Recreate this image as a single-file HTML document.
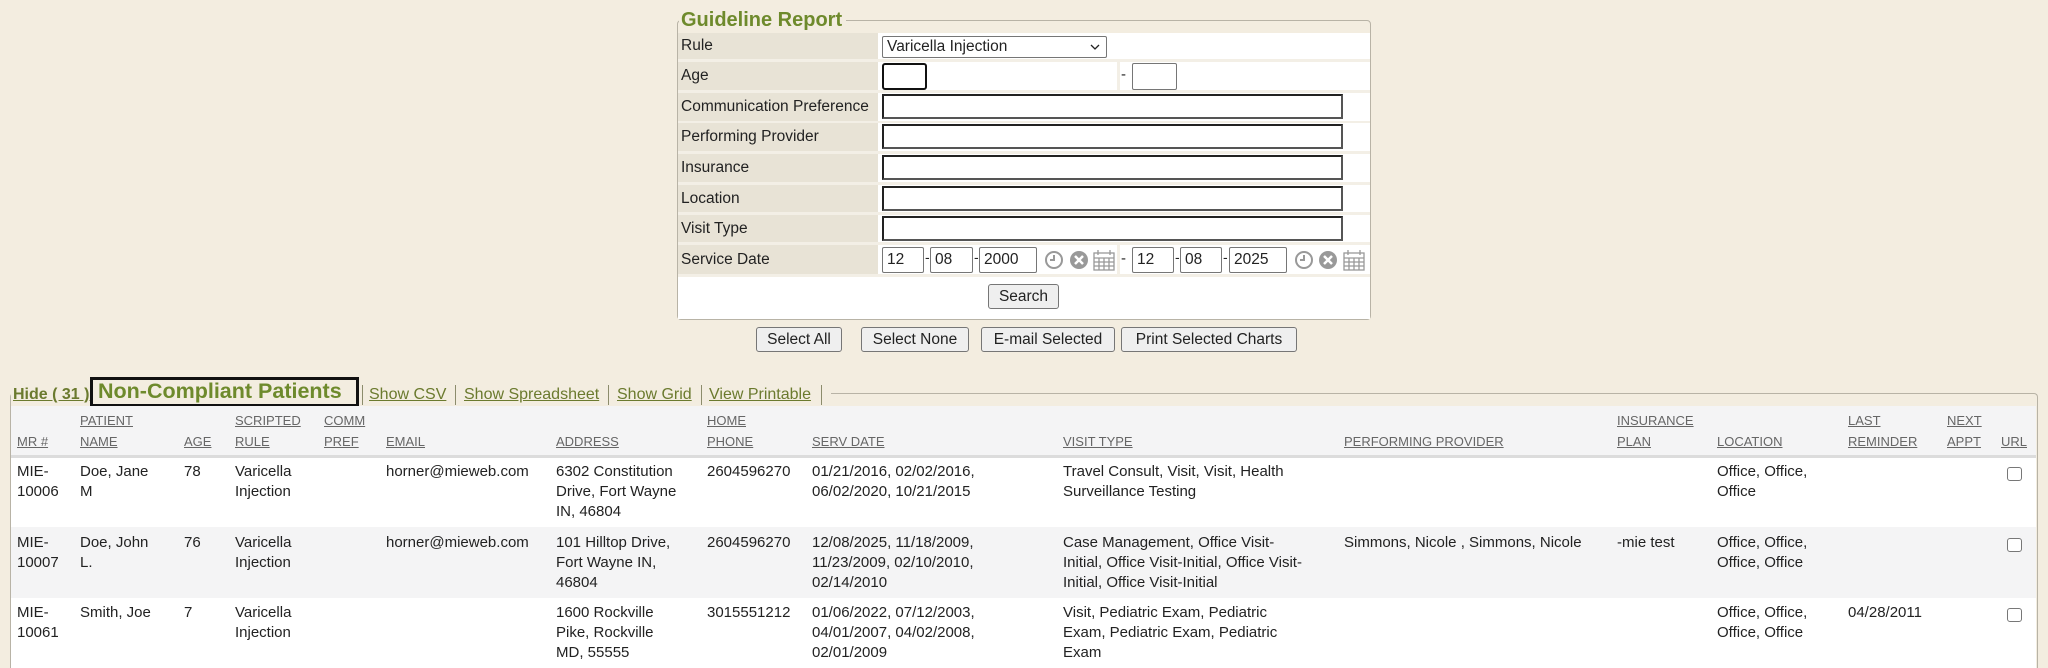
<!DOCTYPE html>
<html style="height:668px;overflow:hidden"><head><meta charset="utf-8"><style>
*{margin:0;padding:0;box-sizing:border-box}
body{width:2048px;height:668px;background:#f3ede0;font-family:"Liberation Sans",Arial,sans-serif;position:relative;overflow:hidden;color:#222}
.a{position:absolute;white-space:nowrap}
.fs{position:absolute;left:677px;top:20px;width:694px;height:300px;border:1px solid #b8b3a6;border-radius:4px}
.lg{position:absolute;left:679px;top:9px;font-weight:bold;font-size:20px;color:#6e8a2c;background:#f3ede0;padding:0 4px 0 2px}
.lab{position:absolute;left:678px;width:200px;background:#e8e3d6;font-size:15.5px;padding-left:3px}
.val{position:absolute;left:880px;width:490px;background:#fff}
.in{position:absolute;background:#fff;border:1px solid #767676;border-radius:2px;font-size:15.5px;padding-left:4px;line-height:24px}
.ta{position:absolute;left:882px;width:461px;height:25px;background:#fff;border:2px solid #222;border-bottom-color:#555;border-right-color:#555}
.btn{position:absolute;background:#efefef;border:1px solid #767676;border-radius:3px;font-size:15.5px;text-align:center;line-height:23px;height:25px}
.lk{position:absolute;top:386px;font-size:16px;color:#6b7a2e;text-decoration:underline}
.sep{position:absolute;top:385px;width:1px;height:20px;background:#8c8c6c}
.h{position:absolute;font-size:13px;color:#666;text-decoration:underline;line-height:21px}
.c{position:absolute;font-size:15px;line-height:20px;white-space:nowrap}
.cb{position:absolute;left:2007px;width:15px;height:14px;border:1px solid #777;border-radius:3px;background:#fff}
</style></head><body>
<div class="fs"></div>
<div class="lg">Guideline Report</div>
<div class="val" style="top:33px;height:286px;left:678px;width:692px;background:#fff"></div>
<div class="lab" style="top:33px;height:26px;line-height:26px">Rule</div>
<div class="lab" style="top:62px;height:28px;line-height:28px">Age</div>
<div class="lab" style="top:93px;height:28px;line-height:28px">Communication Preference</div>
<div class="lab" style="top:123px;height:28px;line-height:28px">Performing Provider</div>
<div class="lab" style="top:154px;height:28px;line-height:28px">Insurance</div>
<div class="lab" style="top:185px;height:28px;line-height:28px">Location</div>
<div class="lab" style="top:215px;height:28px;line-height:28px">Visit Type</div>
<div class="lab" style="top:245px;height:29px;line-height:29px">Service Date</div>
<div style="position:absolute;left:678px;top:59px;width:692px;height:3px;background:#f3efe6"></div>
<div style="position:absolute;left:678px;top:90px;width:692px;height:3px;background:#f3efe6"></div>
<div style="position:absolute;left:678px;top:121px;width:692px;height:2px;background:#f3efe6"></div>
<div style="position:absolute;left:678px;top:151px;width:692px;height:3px;background:#f3efe6"></div>
<div style="position:absolute;left:678px;top:182px;width:692px;height:3px;background:#f3efe6"></div>
<div style="position:absolute;left:678px;top:212px;width:692px;height:3px;background:#f3efe6"></div>
<div style="position:absolute;left:678px;top:242px;width:692px;height:3px;background:#f3efe6"></div>
<div style="position:absolute;left:678px;top:274px;width:692px;height:3px;background:#f3efe6"></div>
<div style="position:absolute;left:1117px;top:62px;width:3px;height:28px;background:#f3efe6"></div>
<div style="position:absolute;left:1117px;top:245px;width:3px;height:29px;background:#f3efe6"></div>
<div class="in" style="left:882px;top:36px;width:225px;height:22px;line-height:20px">Varicella Injection<svg style="position:absolute;right:6px;top:7px" width="10" height="7"><path d="M1 1l4 4 4-4" fill="none" stroke="#222" stroke-width="1.3"/></svg></div>
<div class="in" style="left:882px;top:63px;width:45px;height:27px;border:2px solid #111;border-radius:3px"></div>
<div class="a" style="left:1121px;top:66px;font-size:15px">-</div>
<div class="in" style="left:1132px;top:63px;width:45px;height:27px"></div>
<div class="ta" style="top:94px"></div>
<div class="ta" style="top:124px"></div>
<div class="ta" style="top:155px"></div>
<div class="ta" style="top:186px"></div>
<div class="ta" style="top:216px"></div>
<div class="in" style="left:882px;top:247px;width:42px;height:26px">12</div>
<div class="a" style="left:925px;top:249px;font-size:14px">-</div>
<div class="in" style="left:930px;top:247px;width:43px;height:26px">08</div>
<div class="a" style="left:974px;top:249px;font-size:14px">-</div>
<div class="in" style="left:979px;top:247px;width:58px;height:26px">2000</div>
<div class="in" style="left:1132px;top:247px;width:42px;height:26px">12</div>
<div class="a" style="left:1175px;top:249px;font-size:14px">-</div>
<div class="in" style="left:1180px;top:247px;width:42px;height:26px">08</div>
<div class="a" style="left:1223px;top:249px;font-size:14px">-</div>
<div class="in" style="left:1229px;top:247px;width:58px;height:26px">2025</div>
<div class="a" style="left:1121px;top:250px;font-size:15px">-</div>
<svg class="a" style="left:1043px;top:249px" width="75" height="22"><g fill="none" stroke="#999" stroke-width="2"><circle cx="11" cy="11" r="8"/><path d="M11 6v5h-4"/></g><circle cx="36" cy="11" r="9" fill="#999"/><path d="M32 7l8 8M40 7l-8 8" stroke="#fff" stroke-width="2.5"/><g fill="none" stroke="#999" stroke-width="1.3"><rect x="51" y="4" width="20" height="17"/><path d="M51 9h20M51 13h20M51 17h20M56 9v12M61 9v12M66 9v12M55 1v5M67 1v5"/></g></svg>
<svg class="a" style="left:1293px;top:249px" width="75" height="22"><g fill="none" stroke="#999" stroke-width="2"><circle cx="11" cy="11" r="8"/><path d="M11 6v5h-4"/></g><circle cx="35" cy="11" r="9" fill="#999"/><path d="M31 7l8 8M39 7l-8 8" stroke="#fff" stroke-width="2.5"/><g fill="none" stroke="#999" stroke-width="1.3"><rect x="51" y="4" width="20" height="17"/><path d="M51 9h20M51 13h20M51 17h20M56 9v12M61 9v12M66 9v12M55 1v5M67 1v5"/></g></svg>
<div class="btn" style="left:988px;top:284px;width:71px">Search</div>
<div class="btn" style="left:756px;top:327px;width:86px">Select All</div>
<div class="btn" style="left:861px;top:327px;width:108px">Select None</div>
<div class="btn" style="left:981px;top:327px;width:134px">E-mail Selected</div>
<div class="btn" style="left:1121px;top:327px;width:176px">Print Selected Charts</div>

<div style="position:absolute;left:10px;top:393px;width:2028px;height:275px;border:1px solid #b8b3a6;border-bottom:none;border-radius:4px 4px 0 0"></div>
<div style="position:absolute;left:11px;top:375px;width:820px;height:30px;background:#f3ede0"></div>
<div style="position:absolute;left:11px;top:406px;width:2025px;height:262px;background:#fff"></div>
<div class="a" style="left:13px;top:386px;font-size:16px;font-weight:bold;color:#6b7a2e;text-decoration:underline">Hide ( 31 )</div>
<div class="a" style="left:90px;top:377px;width:269px;height:30px;border:3px solid #111;background:#f3ede0;font-weight:bold;font-size:21.5px;color:#6e8a2c;padding-left:5px;line-height:23px">Non-Compliant Patients</div>
<div class="sep" style="left:362px"></div>
<div class="lk" style="left:369px">Show CSV</div><div class="sep" style="left:455px"></div>
<div class="lk" style="left:464px">Show Spreadsheet</div><div class="sep" style="left:608px"></div>
<div class="lk" style="left:617px">Show Grid</div><div class="sep" style="left:701px"></div>
<div class="lk" style="left:709px">View Printable</div><div class="sep" style="left:821px"></div>

<div style="position:absolute;left:11px;top:406px;width:2025px;height:49px;background:#f4f4f5"></div>
<div style="position:absolute;left:11px;top:455px;width:2025px;height:3px;background:#dcdcdc"></div>
<div style="position:absolute;left:11px;top:527px;width:2025px;height:71px;background:#f4f4f5"></div>

<div class="h" style="left:17px;top:431px">MR #</div>
<div class="h" style="left:80px;top:410px">PATIENT<br>NAME</div>
<div class="h" style="left:184px;top:431px">AGE</div>
<div class="h" style="left:235px;top:410px">SCRIPTED<br>RULE</div>
<div class="h" style="left:324px;top:410px">COMM<br>PREF</div>
<div class="h" style="left:386px;top:431px">EMAIL</div>
<div class="h" style="left:556px;top:431px">ADDRESS</div>
<div class="h" style="left:707px;top:410px">HOME<br>PHONE</div>
<div class="h" style="left:812px;top:431px">SERV DATE</div>
<div class="h" style="left:1063px;top:431px">VISIT TYPE</div>
<div class="h" style="left:1344px;top:431px">PERFORMING PROVIDER</div>
<div class="h" style="left:1617px;top:410px">INSURANCE<br>PLAN</div>
<div class="h" style="left:1717px;top:431px">LOCATION</div>
<div class="h" style="left:1848px;top:410px">LAST<br>REMINDER</div>
<div class="h" style="left:1947px;top:410px">NEXT<br>APPT</div>
<div class="h" style="left:2001px;top:431px">URL</div>

<div class="c" style="left:17px;top:462px">MIE-<br>10006</div>
<div class="c" style="left:80px;top:462px">Doe, Jane<br>M</div>
<div class="c" style="left:184px;top:462px">78</div>
<div class="c" style="left:235px;top:462px">Varicella<br>Injection</div>
<div class="c" style="left:386px;top:462px">horner@mieweb.com</div>
<div class="c" style="left:556px;top:462px">6302 Constitution<br>Drive, Fort Wayne<br>IN, 46804</div>
<div class="c" style="left:707px;top:462px">2604596270</div>
<div class="c" style="left:812px;top:462px">01/21/2016, 02/02/2016,<br>06/02/2020, 10/21/2015</div>
<div class="c" style="left:1063px;top:462px">Travel Consult, Visit, Visit, Health<br>Surveillance Testing</div>
<div class="c" style="left:1717px;top:462px">Office, Office,<br>Office</div>
<div class="cb" style="top:467px"></div>

<div class="c" style="left:17px;top:533px">MIE-<br>10007</div>
<div class="c" style="left:80px;top:533px">Doe, John<br>L.</div>
<div class="c" style="left:184px;top:533px">76</div>
<div class="c" style="left:235px;top:533px">Varicella<br>Injection</div>
<div class="c" style="left:386px;top:533px">horner@mieweb.com</div>
<div class="c" style="left:556px;top:533px">101 Hilltop Drive,<br>Fort Wayne IN,<br>46804</div>
<div class="c" style="left:707px;top:533px">2604596270</div>
<div class="c" style="left:812px;top:533px">12/08/2025, 11/18/2009,<br>11/23/2009, 02/10/2010,<br>02/14/2010</div>
<div class="c" style="left:1063px;top:533px">Case Management, Office Visit-<br>Initial, Office Visit-Initial, Office Visit-<br>Initial, Office Visit-Initial</div>
<div class="c" style="left:1344px;top:533px">Simmons, Nicole , Simmons, Nicole</div>
<div class="c" style="left:1617px;top:533px">-mie test</div>
<div class="c" style="left:1717px;top:533px">Office, Office,<br>Office, Office</div>
<div class="cb" style="top:538px"></div>

<div class="c" style="left:17px;top:603px">MIE-<br>10061</div>
<div class="c" style="left:80px;top:603px">Smith, Joe</div>
<div class="c" style="left:184px;top:603px">7</div>
<div class="c" style="left:235px;top:603px">Varicella<br>Injection</div>
<div class="c" style="left:556px;top:603px">1600 Rockville<br>Pike, Rockville<br>MD, 55555</div>
<div class="c" style="left:707px;top:603px">3015551212</div>
<div class="c" style="left:812px;top:603px">01/06/2022, 07/12/2003,<br>04/01/2007, 04/02/2008,<br>02/01/2009</div>
<div class="c" style="left:1063px;top:603px">Visit, Pediatric Exam, Pediatric<br>Exam, Pediatric Exam, Pediatric<br>Exam</div>
<div class="c" style="left:1717px;top:603px">Office, Office,<br>Office, Office</div>
<div class="c" style="left:1848px;top:603px">04/28/2011</div>
<div class="cb" style="top:608px"></div>
</body></html>
